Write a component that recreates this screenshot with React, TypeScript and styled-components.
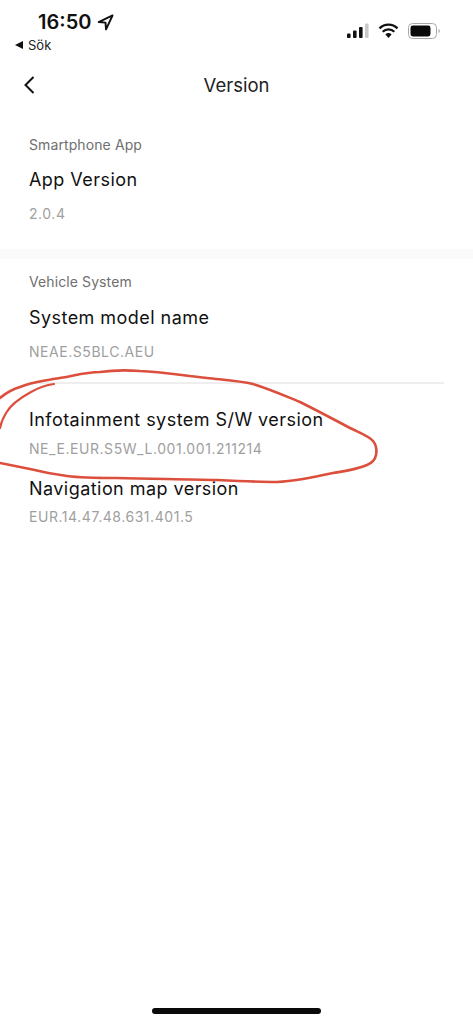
import React from "react";
import styled, { createGlobalStyle } from "styled-components";

const GlobalStyle = createGlobalStyle`
  html, body {
    margin: 0;
    padding: 0;
    background: #fff;
  }
`;

const App = () => {
  return (
    <Page>
      <GlobalStyle />
      <StatusBar>
        <StatusLeft>
          <TimeRow>
            <Time>16:50</Time>
            <svg width="17" height="17" viewBox="0 0 16 16">
              <path d="M14.600 1.400 1.600 7.600 8 8.100l.5 6.400z" fill="none" stroke="#111" strokeWidth="1.800" strokeLinejoin="round" />
            </svg>
          </TimeRow>
          <BackToApp>
            <BackTriangle />
            Sök
          </BackToApp>
        </StatusLeft>
        <StatusIcons>
          <svg width="22" height="16" viewBox="0 0 22 16">
            <rect x="0" y="10.500" width="3.600" height="4.500" rx="1" fill="#111" />
            <rect x="6" y="7.500" width="3.600" height="7.500" rx="1" fill="#111" />
            <rect x="12" y="4" width="3.600" height="11" rx="1" fill="#111" />
            <rect x="18" y="0.500" width="3.600" height="14.500" rx="1" fill="#c9c9c9" />
          </svg>
          <svg width="21" height="16" viewBox="0 0 21 16">
            <path d="M1.500 5.400a12.800 12.800 0 0 1 18 0M4.700 8.800a8.300 8.300 0 0 1 11.600 0" fill="none" stroke="#111" strokeWidth="2.300" />
            <path d="M7.400 11.400a4.400 4.400 0 0 1 6.200 0l-3.100 3.500z" fill="#111" />
          </svg>
          <svg width="33" height="16" viewBox="0 0 33 16">
            <rect x="0.500" y="0.500" width="28" height="15" rx="4" fill="none" stroke="#a8a8a8" />
            <rect x="2.500" y="2.500" width="20" height="11" rx="2.400" fill="#0a0a0a" />
            <path d="M30.500 6v4c.8-.3 1.300-1.100 1.300-2s-.5-1.700-1.300-2z" fill="#a8a8a8" />
          </svg>
        </StatusIcons>
      </StatusBar>

      <NavBar>
        <BackButton aria-label="Back">
          <svg width="14" height="20" viewBox="0 0 14 20">
            <path d="M11.500 2 3.500 10l8 8" fill="none" stroke="#111" strokeWidth="2" />
          </svg>
        </BackButton>
        <NavTitle>Version</NavTitle>
      </NavBar>

      <Section $top={25} $bottom={25}>
        <SectionLabel>Smartphone App</SectionLabel>
        <ItemTitle $gap={13}>App Version</ItemTitle>
        <ItemValue $gap={12}>2.0.4</ItemValue>
      </Section>

      <Band />

      <Section $top={13} $bottom={0}>
        <SectionLabel>Vehicle System</SectionLabel>
        <ItemTitle $gap={14}>System model name</ItemTitle>
        <ItemValue $gap={12}>NEAE.S5BLC.AEU</ItemValue>
        <Divider />
        <ItemTitle $gap={24}>Infotainment system S/W version</ItemTitle>
        <ItemValue $gap={7}>NE_E.EUR.S5W_L.001.001.211214</ItemValue>
        <ItemTitle $gap={18}>Navigation map version</ItemTitle>
        <ItemValue $gap={6}>EUR.14.47.48.631.401.5</ItemValue>
      </Section>

      <HomeIndicator />

      <Scribble viewBox="0 0 473 1024" width="473" height="1024">
        <path
          d="M0 398C6 393 13 389 20 387C32 382 44 381 53 379C70 377 84 372 100 372C114 370 128 370 140 371C164 372 185 376 207 378C225 380 240 381 253 384C270 389 285 396 300 402C318 411 335 420 350 428C360 433 369 436 373 441C377 446 377 450 376 455C375 460 372 463 367 465C355 470 345 471 333 473C315 477 295 481 277 482C258 482 237 481 217 480C185 479 150 479 117 478C100 478 82 478 67 476C52 474 42 472 30 469C20 467 10 465 0 463"
          fill="none"
          stroke="#dd4f3d"
          strokeWidth="2.600"
          strokeLinecap="round"
        />
        <path
          d="M54 384C46 385 38 388 31 392C20 398 11 404 6 413C3 418 1 423 0 428"
          fill="none"
          stroke="#dd4f3d"
          strokeWidth="2.200"
          strokeLinecap="round"
        />
      </Scribble>
    </Page>
  );
};

const Page = styled.div`
  position: relative;
  display: flex;
  flex-direction: column;
  width: 473px;
  height: 1024px;
  overflow: hidden;
  background: #fff;
  font-family: Inter, "Liberation Sans", sans-serif;
`;

const StatusBar = styled.div`
  display: flex;
  justify-content: space-between;
  height: 60px;
  box-sizing: border-box;
  padding: 10px 32px 0 15px;
`;

const StatusLeft = styled.div`
  display: flex;
  flex-direction: column;
`;

const TimeRow = styled.div`
  display: flex;
  align-items: center;
  gap: 6px;
  padding-left: 23px;
  height: 24px;
`;

const Time = styled.span`
  font-size: 20px;
  font-weight: 600;
  color: #111;
`;

const BackToApp = styled.div`
  display: flex;
  align-items: center;
  gap: 5px;
  margin-top: 3px;
  font-size: 13px;
  line-height: 16px;
  color: #222;
`;

const BackTriangle = styled.span`
  width: 0;
  height: 0;
  border-top: 4px solid transparent;
  border-bottom: 4px solid transparent;
  border-right: 8px solid #111;
`;

const StatusIcons = styled.div`
  display: flex;
  align-items: center;
  gap: 9px;
  height: 42px;
`;

const NavBar = styled.div`
  display: flex;
  align-items: center;
  justify-content: center;
  position: relative;
  height: 50px;
`;

const BackButton = styled.button`
  position: absolute;
  left: 22px;
  top: 15px;
  display: flex;
  padding: 0;
  border: 0;
  background: none;
`;

const NavTitle = styled.h1`
  margin: 0;
  font-size: 18.500px;
  font-weight: 400;
  line-height: 50px;
  color: #222;
`;

const Section = styled.section<{ $top: number; $bottom: number }>`
  padding: ${(p) => p.$top}px 29px ${(p) => p.$bottom}px;
`;

const SectionLabel = styled.div`
  font-size: 14px;
  letter-spacing: 0.1px;
  line-height: 20px;
  color: #6f6f6f;
`;

const ItemTitle = styled.div<{ $gap: number }>`
  margin-top: ${(p) => p.$gap}px;
  font-size: 18px;
  letter-spacing: 0.45px;
  line-height: 24px;
  color: #111;
`;

const ItemValue = styled.div<{ $gap: number }>`
  margin-top: ${(p) => p.$gap}px;
  font-size: 14px;
  letter-spacing: 0.55px;
  line-height: 20px;
  color: #a0a0a0;
`;

const Band = styled.div`
  height: 10px;
  background: #fafafa;
`;

const Divider = styled.div`
  height: 2px;
  margin-top: 20px;
  background: #eeeeee;
`;

const HomeIndicator = styled.div`
  align-self: center;
  width: 169px;
  height: 6px;
  margin-top: auto;
  margin-bottom: 10px;
  border-radius: 3px;
  background: #0a0a0a;
`;

const Scribble = styled.svg`
  position: absolute;
  top: 0;
  left: 0;
  pointer-events: none;
`;

export default App;
